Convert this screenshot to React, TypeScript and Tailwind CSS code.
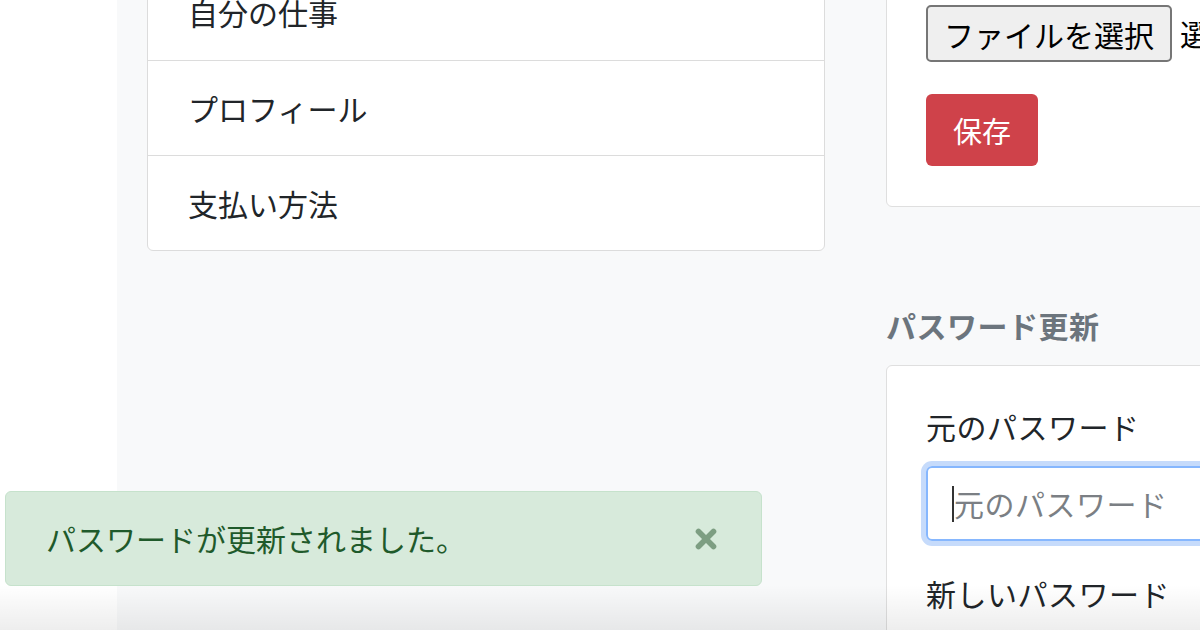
import { X } from 'lucide-react';

const menu = ['自分の仕事', 'プロフィール', '支払い方法'];

const jp = { fontFamily: '"Noto Sans CJK JP", "Noto Sans", sans-serif' };

export default function App() {
  return (
    <div className="relative w-[1200px] h-[630px] overflow-hidden flex bg-white text-[#212529]" style={jp}>
      {/* sidebar strip */}
      <div className="w-[117px] shrink-0 bg-white" />

      {/* main */}
      <div className="flex-1 bg-[#f8f9fa] flex gap-[61px] pl-[30px]">
        {/* menu */}
        <div className="w-[678px] shrink-0">
          <div className="-mt-[36px] bg-white border border-[#dcdcdc] rounded-[6px]">
            {menu.map((m, i) => (
              <div
                key={m}
                className={`h-[95px] flex items-center px-[40px] text-[30px] ${i > 0 ? 'border-t border-[#dcdcdc]' : ''}`}
              >
                {m}
              </div>
            ))}
          </div>
        </div>

        {/* settings */}
        <div className="flex-1 min-w-0">
          <div className="-mt-[36px] bg-white border border-[#dfdfdf] rounded-[6px] pt-[40px] pb-[40px] px-[39px]">
            <div className="flex items-center gap-[8px] whitespace-nowrap">
              <button className="h-[57px] px-[16px] bg-[#efefef] border-2 border-[#767676] rounded-[5px] text-[30px] text-black leading-none">
                ファイルを選択
              </button>
              <span className="text-[30px] text-black">選択されていません</span>
            </div>
            <button className="mt-[32px] w-[112px] h-[72px] bg-[#cf424a] rounded-[6px] text-white text-[29px] leading-none">
              保存
            </button>
          </div>

          <h2 className="mt-[100px] mb-[22px] text-[30px] leading-[36px] font-bold text-[#6c757d] tracking-[0.5px]">パスワード更新</h2>

          <div className="bg-white border border-[#dfdfdf] rounded-[6px] pt-[38px] px-[39px] h-[300px]">
            <label className="block text-[30px] leading-[45px] mb-[17px] whitespace-nowrap tracking-[0.5px]">元のパスワード</label>
            <div className="h-[75px] border-2 border-[#86b7fe] rounded-[6px] ring-[5px] ring-[#c6dbfb] flex items-center pl-[24px] -mr-[60px]">
              <span className="w-[2px] h-[36px] bg-[#333]" />
              <span className="text-[30px] text-[#7b7f84] whitespace-nowrap tracking-[0.5px]">元のパスワード</span>
            </div>
            <label className="block mt-[30px] text-[30px] leading-[45px] whitespace-nowrap tracking-[0.5px]">新しいパスワード</label>
          </div>
        </div>
      </div>

      {/* toast alert */}
      <div className="absolute left-[5px] top-[491px] w-[757px] h-[95px] bg-[#d7eadb] border border-[#c6e2cc] rounded-[6px] flex items-center justify-between pl-[40px] pr-[40px]">
        <span className="text-[30px] text-[#1f5a2b]">パスワードが更新されました。</span>
        <X size={30} strokeWidth={4.5} className="text-[#7d9e82]" />
      </div>

      {/* bottom shade */}
      <div className="pointer-events-none absolute inset-x-0 bottom-0 h-[45px] bg-linear-to-b from-transparent to-black/[0.07]" />
    </div>
  );
}
